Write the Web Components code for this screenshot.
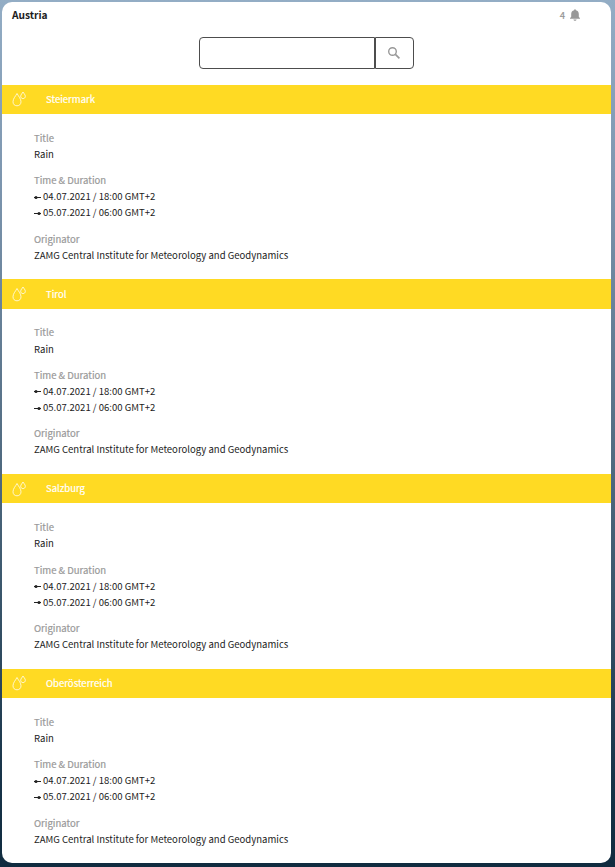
<!DOCTYPE html>
<html lang="en">
<head>
<meta charset="utf-8">
<title>Austria</title>
<style>
  html { height: 100%; }
  body {
    margin: 0;
    height: 867px;
    box-sizing: border-box;
    padding: 2px 4px 4px 2px;
    overflow: hidden;
    background: linear-gradient(#93adc5 0%, #7e97b0 20%, #567086 49%, #3b576c 68%, #173348 90%, #102b3f 100%);
    font-family: "Noto Sans CJK JP", "Noto Sans", sans-serif;
    font-size: 9.55px;
    color: #1c1c1c;
  }
</style>
</head>
<body>
<warning-panel region="Austria"></warning-panel>

<script>
class PanelHeader extends HTMLElement {
  constructor() {
    super();
    this.attachShadow({ mode: 'open' });
  }

  connectedCallback() {
    this.shadowRoot.innerHTML = `
      <style>
        :host {
          display: flex;
          justify-content: space-between;
          height: 27px;
          line-height: 26px;
          padding: 0 31px 0 10px;
        }
        .name { font-size: 10.2px; font-weight: 700; }
        .count {
          display: flex;
          align-items: center;
          gap: 5px;
          height: 26px;
          color: #949494;
          -webkit-text-stroke: .2px #949494;
        }
        svg { display: block; fill: #999; }
      </style>
      <span class="name"><slot></slot></span>
      <span class="count">
        <span>${this.getAttribute('count')}</span>
        <svg width="10" height="12" viewBox="0 0 10 12">
          <path d="M5 0.3C5.6 .3 5.9 .6 5.9 1.2C7.8 1.7 8.8 3.1 8.8 5V7.8L10 9.2V9.8H0V9.2L1.2 7.8V5C1.2 3.1 2.2 1.7 4.1 1.2C4.1 .6 4.4 .3 5 .3Z"/>
          <path d="M3.4 10.4H6.6C6.4 11.3 5.8 11.7 5 11.7S3.6 11.3 3.4 10.4Z"/>
        </svg>
      </span>
    `;
  }
}

class SearchBox extends HTMLElement {
  constructor() {
    super();
    this.attachShadow({ mode: 'open' });
  }

  connectedCallback() {
    this.shadowRoot.innerHTML = `
      <style>
        :host {
          display: flex;
          width: 215px;
          height: 32px;
        }
        input, button {
          box-sizing: border-box;
          height: 32px;
          margin: 0;
          padding: 0;
          border: 1px solid #4d4d4d;
          background: #fff;
          outline: none;
          font: inherit;
        }
        input {
          width: 176px;
          padding: 0 8px;
          border-radius: 4px 0 0 4px;
        }
        button {
          width: 39px;
          display: flex;
          align-items: center;
          justify-content: center;
          padding-right: 2px;
          border-radius: 0 4px 4px 0;
        }
      </style>
      <input type="text" aria-label="Search">
      <button aria-label="Search">
        <svg width="12" height="12" viewBox="0 0 12 12" fill="none" stroke="#999">
          <circle cx="4.5" cy="4.5" r="3.8" stroke-width="1.4"/>
          <path d="M7.4 7.4L11.4 11.4" stroke-width="1.7"/>
        </svg>
      </button>
    `;
  }
}

class WarningField extends HTMLElement {
  constructor() {
    super();
    this.attachShadow({ mode: 'open' });
  }

  connectedCallback() {
    this.shadowRoot.innerHTML = `
      <style>
        :host { display: block; line-height: 16.1px; }
        .label { color: #999; -webkit-text-stroke: .2px #999; }
      </style>
      <div class="label">${this.getAttribute('label')}</div>
      <slot></slot>
    `;
  }
}

class TimeLine extends HTMLElement {
  constructor() {
    super();
    this.attachShadow({ mode: 'open' });
  }

  connectedCallback() {
    // start: dot on the left, end: dot on the right
    const cx = this.getAttribute('kind') === 'start' ? 2 : 5;
    this.shadowRoot.innerHTML = `
      <style>
        :host { display: flex; align-items: center; gap: 2px; height: 16.1px; }
        svg { display: block; position: relative; top: 1px; }
      </style>
      <svg width="7" height="5" viewBox="0 0 7 5" fill="#222">
        <rect x="0" y="2" width="7" height="1"/>
        <circle cx="${cx}" cy="2.5" r="1.5"/>
      </svg>
      <span><slot></slot></span>
    `;
  }
}

class WarningItem extends HTMLElement {
  constructor() {
    super();
    this.attachShadow({ mode: 'open' });
  }

  connectedCallback() {
    this.shadowRoot.innerHTML = `
      <style>
        :host { display: block; height: 194.7px; }
        .bar {
          display: flex;
          align-items: center;
          gap: 20px;
          height: 29.3px;
          padding-left: 10px;
          background: #ffda23;
          color: #fff;
        }
        .bar span { line-height: 16px; padding-bottom: 1px; -webkit-text-stroke: .2px #fff; }
        svg { display: block; }
        .fields {
          display: flex;
          flex-direction: column;
          gap: 10.2px;
          padding: 15.8px 32px 0;
        }
      </style>
      <div class="bar">
        <svg width="14" height="16" viewBox="0 0 14 16" fill="none" stroke="#fff" stroke-opacity=".85" stroke-width=".9">
          <path d="M5 2.5C3.6 5.2 1 7.6 1 10.8C1 13.3 2.7 14.8 5 14.8S9 13.3 9 10.8C9 7.6 6.4 5.2 5 2.5Z"/>
          <path d="M11 1C10.2 2.5 8.7 3.6 8.7 5.3C8.7 6.8 9.7 7.6 11 7.6S13.3 6.8 13.3 5.3C13.3 3.6 11.8 2.5 11 1Z"/>
        </svg>
        <span>${this.getAttribute('region')}</span>
      </div>
      <div class="fields"><slot></slot></div>
    `;
  }
}

class WarningPanel extends HTMLElement {
  constructor() {
    super();
    this.attachShadow({ mode: 'open' });
    this.warnings = ['Steiermark', 'Tirol', 'Salzburg', 'Oberösterreich'].map(region => ({
      region,
      title: 'Rain',
      start: '04.07.2021 / 18:00 GMT+2',
      end: '05.07.2021 / 06:00 GMT+2',
      originator: 'ZAMG Central Institute for Meteorology and Geodynamics'
    }));
  }

  connectedCallback() {
    this.shadowRoot.innerHTML = `
      <style>
        :host {
          display: block;
          height: 861px;
          border-radius: 10px;
          background: #fff;
          overflow: hidden;
        }
        search-box { margin: 8px auto 15.7px 197px; }
      </style>
      <panel-header count="${this.warnings.length}">${this.getAttribute('region')}</panel-header>
      <search-box></search-box>
      ${this.warnings.map(w => `
        <warning-item region="${w.region}">
          <warning-field label="Title">${w.title}</warning-field>
          <warning-field label="Time &amp; Duration">
            <time-line kind="start">${w.start}</time-line>
            <time-line kind="end">${w.end}</time-line>
          </warning-field>
          <warning-field label="Originator">${w.originator}</warning-field>
        </warning-item>
      `).join('')}
    `;
  }
}

customElements.define('panel-header', PanelHeader);
customElements.define('search-box', SearchBox);
customElements.define('warning-field', WarningField);
customElements.define('time-line', TimeLine);
customElements.define('warning-item', WarningItem);
customElements.define('warning-panel', WarningPanel);
</script>
</body>
</html>
